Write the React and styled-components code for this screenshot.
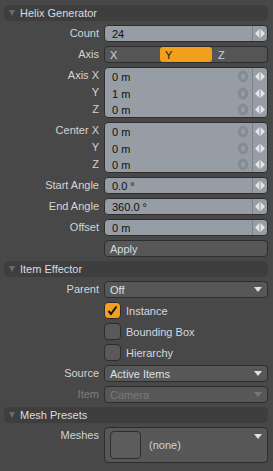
import React from "react";
import styled, { createGlobalStyle, css } from "styled-components";

const Global = createGlobalStyle`
  html, body {
    margin: 0;
    padding: 0;
    background: #484848;
  }
  body {
    font-family: "Liberation Sans", Arial, sans-serif;
    font-size: 11px;
  }
`;

const Panel = styled.div`
  width: 273px;
  height: 471px;
  box-sizing: border-box;
  padding: 5px 5px 0 4px;
  display: flex;
  flex-direction: column;
  gap: 4px;
  background: #484848;
  overflow: hidden;
`;

const Header = styled.div`
  height: 16px;
  display: flex;
  align-items: center;
  gap: 5px;
  padding-left: 5px;
  background: #3e3e3e;
  border-radius: 5px;
  color: #d8dce4;
  font-size: 11px;
`;

const Tri = styled.span`
  width: 0;
  height: 0;
  border-left: 3.5px solid transparent;
  border-right: 3.5px solid transparent;
  border-top: 6px solid #6a6a6a;
`;

const Row = styled.div`
  display: grid;
  grid-template-columns: 95px 164px;
  column-gap: 5px;
`;

const Labels = styled.div`
  display: flex;
  flex-direction: column;
`;

const Label = styled.div`
  height: 17px;
  line-height: 17px;
  text-align: right;
  color: ${p => (p.dim ? "#7e7e7e" : "#d4d4d4")};
  white-space: nowrap;
`;

const Box = styled.div`
  box-sizing: border-box;
  border: 1px solid #2d2d2d;
  border-radius: 4px;
  overflow: hidden;
`;

const NumBox = styled(Box)`
  background: #969da4;
  display: flex;
  flex-direction: column;
`;

const NumLine = styled.div`
  height: ${p => (p.last ? 15 : 17)}px;
  display: flex;
  align-items: center;
  color: #111;
`;

const Value = styled.div`
  flex: 1;
  padding-left: 7px;
`;

const Reset = styled.svg`
  width: 12px;
  height: 13px;
  margin-right: 3px;
`;

const Spin = styled.div`
  width: 14px;
  align-self: stretch;
  display: flex;
  align-items: center;
  justify-content: center;
  border-left: 1px solid #7b8289;
`;

const Arrows = () => (
  <svg width="10" height="9" viewBox="0 0 10 9">
    <polygon points="4,0.5 4,8.5 0,4.5" fill="#e6e6e6" />
    <polygon points="6,0.5 6,8.5 10,4.5" fill="#e6e6e6" />
    <rect x="4.6" y="0" width="0.8" height="9" fill="#e6e6e6" />
  </svg>
);

const NumField = ({ value }) => (
  <NumBox>
    <NumLine last>
      <Value>{value}</Value>
      <Spin>
        <Arrows />
      </Spin>
    </NumLine>
  </NumBox>
);

const VecField = ({ values }) => (
  <NumBox>
    {values.map((v, i) => (
      <NumLine key={i} last={i === values.length - 1}>
        <Value>{v}</Value>
        <Reset viewBox="0 0 12 13">
          <ellipse cx="6" cy="6.5" rx="3.6" ry="4.4" fill="none" stroke="#868b90" strokeWidth="3" />
        </Reset>
        <Spin>
          <Arrows />
        </Spin>
      </NumLine>
    ))}
  </NumBox>
);

const Segments = styled(Box)`
  height: 17px;
  display: grid;
  grid-template-columns: 1fr 1fr 1fr;
  background: #555;
`;

const Segment = styled.div`
  display: flex;
  align-items: center;
  padding-left: 5px;
  color: #cfd3da;
  ${p =>
    p.on &&
    css`
      background: #f29f1e;
      color: #1b1b1b;
      border-radius: 3px;
      margin: 0 1px;
    `}
`;

const Button = styled(Box)`
  height: 17px;
  display: flex;
  align-items: center;
  padding-left: 5px;
  background: #575757;
  color: #d6dae2;
`;

const Drop = styled(Box)`
  height: 17px;
  display: flex;
  align-items: center;
  justify-content: space-between;
  padding: 0 5px 0 5px;
  background: #575757;
  color: ${p => (p.dim ? "#7a7a7a" : "#dde1e8")};
`;

const DropTri = styled.span`
  width: 0;
  height: 0;
  border-left: 4px solid transparent;
  border-right: 4px solid transparent;
  border-top: 5px solid ${p => (p.dim ? "#777" : "#e0e0e0")};
`;

const CheckRow = styled.div`
  display: flex;
  align-items: center;
  gap: 5px;
  color: #d4d8e0;
`;

const Check = styled(Box)`
  width: 17px;
  height: 17px;
  border-radius: 4px;
  background: ${p => (p.on ? "#f29f1e" : "#595959")};
  display: flex;
  align-items: center;
  justify-content: center;
`;

const MeshBox = styled(Box)`
  height: 36px;
  background: #575757;
  position: relative;
  display: flex;
  align-items: center;
  gap: 8px;
  padding-left: 5px;
  color: #c9d1e4;
`;

const Thumb = styled.div`
  width: 31px;
  height: 28px;
  box-sizing: border-box;
  border: 1px solid #2d2d2d;
  border-radius: 4px;
  background: #5c5c5c;
`;

const CornerTri = styled(DropTri)`
  position: absolute;
  top: 6px;
  right: 5px;
`;

const Dropdown = ({ value, dim }) => (
  <Drop dim={dim}>
    <span>{value}</span>
    <DropTri dim={dim} />
  </Drop>
);

const CheckItem = ({ on, text }) => (
  <CheckRow>
    <Check on={on}>
      {on && (
        <svg width="11" height="11" viewBox="0 0 11 11">
          <path d="M1.5 6 L4 9 L9.5 1.5" fill="none" stroke="#111" strokeWidth="2" />
        </svg>
      )}
    </Check>
    {text}
  </CheckRow>
);

export default function App() {
  return (
    <>
      <Global />
      <Panel>
        <Header>
          <Tri />
          Helix Generator
        </Header>
        <Row>
          <Label>Count</Label>
          <NumField value="24" />
        </Row>
        <Row>
          <Label>Axis</Label>
          <Segments>
            <Segment>X</Segment>
            <Segment on>Y</Segment>
            <Segment>Z</Segment>
          </Segments>
        </Row>
        <Row>
          <Labels>
            <Label>Axis X</Label>
            <Label>Y</Label>
            <Label>Z</Label>
          </Labels>
          <VecField values={["0 m", "1 m", "0 m"]} />
        </Row>
        <Row>
          <Labels>
            <Label>Center X</Label>
            <Label>Y</Label>
            <Label>Z</Label>
          </Labels>
          <VecField values={["0 m", "0 m", "0 m"]} />
        </Row>
        <Row>
          <Label>Start Angle</Label>
          <NumField value="0.0 °" />
        </Row>
        <Row>
          <Label>End Angle</Label>
          <NumField value="360.0 °" />
        </Row>
        <Row>
          <Label>Offset</Label>
          <NumField value="0 m" />
        </Row>
        <Row>
          <span />
          <Button>Apply</Button>
        </Row>
        <Header>
          <Tri />
          Item Effector
        </Header>
        <Row>
          <Label>Parent</Label>
          <Dropdown value="Off" />
        </Row>
        <Row>
          <span />
          <CheckItem on text="Instance" />
        </Row>
        <Row>
          <span />
          <CheckItem text="Bounding Box" />
        </Row>
        <Row>
          <span />
          <CheckItem text="Hierarchy" />
        </Row>
        <Row>
          <Label>Source</Label>
          <Dropdown value="Active Items" />
        </Row>
        <Row>
          <Label dim>Item</Label>
          <Dropdown value="Camera" dim />
        </Row>
        <Header>
          <Tri />
          Mesh Presets
        </Header>
        <Row>
          <Label>Meshes</Label>
          <MeshBox>
            <Thumb />
            (none)
            <CornerTri />
          </MeshBox>
        </Row>
      </Panel>
    </>
  );
}
